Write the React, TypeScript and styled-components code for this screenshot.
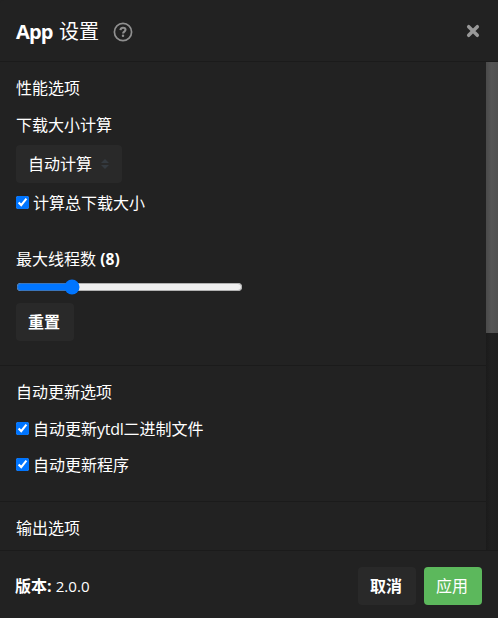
import React, { useState } from "react";
import styled, { createGlobalStyle } from "styled-components";

const GlobalStyle = createGlobalStyle`
  * { box-sizing: border-box; }
  html, body { margin: 0; background: #222; overflow: hidden; }
  body, button { font-family: "Open Sans", "Noto Sans CJK SC", sans-serif; }
  body { font-size: 16px; line-height: 24px; color: #fff; }
`;

const Modal = styled.div`
  display: flex;
  flex-direction: column;
  width: 498px;
  height: 618px;
  background: #222;
  border-radius: 4px;
  overflow: hidden;
`;

const Header = styled.header`
  display: flex;
  align-items: center;
  flex: none;
  height: 62px;
  padding: 0 16px;
  border-bottom: 1px solid #1b1b1b;
`;

const Title = styled.h5`
  display: flex;
  gap: 5px;
  margin: 2px 0 0;
  font-size: 20px;
  line-height: 30px;
  font-weight: 400;
  white-space: nowrap;
`;

const AppName = styled.span`
  display: inline-block;
  width: 38px;
  font-weight: 700;
  letter-spacing: -0.8px;
`;

const HelpIcon = styled.svg`
  margin: 2px 0 0 14px;
  color: #8f8f8f;
`;

const Close = styled.button`
  display: flex;
  margin: 0 2px 0 auto;
  padding: 0;
  border: 0;
  background: none;
  color: #999;
`;

const Body = styled.main`
  display: flex;
  flex: 1;
  min-height: 0;
  overflow: hidden;
`;

const Sections = styled.div`
  flex: 1;
  overflow: hidden;
`;

const ScrollTrack = styled.div`
  width: 12px;
  background: linear-gradient(to right, #1b1b1b, #202020 45%, #1e1e1e);
`;

const ScrollThumb = styled.div`
  height: 271px;
  background: linear-gradient(to right, #4a4a4a, #555 45%, #505050);
`;

const Section = styled.section<{ $height: number }>`
  height: ${(p) => p.$height}px;
  padding: 14px 16px 0;
  border-bottom: 1px solid #1b1b1b;
`;

const Label = styled.div<{ $top?: number }>`
  height: 24px;
  margin-top: ${(p) => p.$top ?? 0}px;
  white-space: nowrap;
  b { font-weight: 700; font-size: 15.6px; }
`;

const CheckRow = styled.label<{ $top: number }>`
  display: flex;
  align-items: center;
  height: 24px;
  margin-top: ${(p) => p.$top}px;
  white-space: nowrap;
  input {
    width: 13px;
    height: 13px;
    margin: 0 4px 2px 0;
  }
`;

const LatinWord = styled.span`
  letter-spacing: -0.25px;
`;

const Button = styled.button<{ $green?: boolean; $bold?: boolean }>`
  display: inline-flex;
  align-items: center;
  justify-content: center;
  width: 58px;
  height: 38px;
  padding: 0 2px 0 0;
  border: 0;
  border-radius: 4px;
  background: ${(p) => (p.$green ? "#5cb85c" : "#292929")};
  color: #fff;
  font-size: 16px;
  line-height: 24px;
  font-weight: ${(p) => (p.$bold ? 600 : 400)};
`;

const Select = styled(Button)`
  display: flex;
  justify-content: space-between;
  width: 106px;
  margin: 8px 0 0;
  padding: 0 13px 0 12px;
`;

const Range = styled.input`
  display: block;
  width: 227px;
  height: 16px;
  margin: 8px 0;
`;

const Footer = styled.footer`
  display: flex;
  align-items: center;
  flex: none;
  gap: 8px;
  height: 68px;
  padding: 3px 16px 0 15px;
  border-top: 1px solid #1b1b1b;
`;

const Version = styled.div`
  margin-right: auto;
  b { font-weight: 700; }
  span { font-size: 15.1px; }
`;

function Check({ top, children }: { top: number; children: React.ReactNode }) {
  return (
    <CheckRow $top={top}>
      <input type="checkbox" defaultChecked />
      <span>{children}</span>
    </CheckRow>
  );
}

export default function App() {
  const [threads, setThreads] = useState(8);
  return (
    <>
      <GlobalStyle />
      <Modal>
        <Header>
          <Title><AppName>App</AppName><span>设置</span></Title>
          <HelpIcon width="20" height="20" viewBox="0 0 20 20" fill="none" stroke="currentColor">
            <circle cx="10" cy="10" r="8.6" strokeWidth="1.7" />
            <path d="M7.4 8.1c.3-1.7 1.3-2.4 2.6-2.4 1.5 0 2.5.9 2.5 2.1 0 1.8-2.4 1.8-2.4 3.7" strokeWidth="2.1" />
            <circle cx="10" cy="13.8" r="1.25" fill="currentColor" stroke="none" />
          </HelpIcon>
          <Close aria-label="关闭">
            <svg width="14" height="14" viewBox="0 0 14 14" fill="none" stroke="currentColor" strokeWidth="3.5" strokeLinecap="round">
              <path d="M2.7 2.7l8.6 8.6M11.3 2.7l-8.6 8.6" />
            </svg>
          </Close>
        </Header>
        <Body>
          <Sections>
            <Section $height={304}>
              <Label>性能选项</Label>
              <Label $top={13}>下载大小计算</Label>
              <Select>
                自动计算
                <svg width="8" height="10" viewBox="0 0 8 10" fill="#343a40">
                  <path d="M0 4l4-4 4 4zM0 6l4 4 4-4z" />
                </svg>
              </Select>
              <Check top={8}>计算总下载大小</Check>
              <Label $top={32}>最大线程数 <b>({threads})</b></Label>
              <Range type="range" min={1} max={32} value={threads} onChange={(e) => setThreads(Number(e.target.value))} />
              <Button $bold onClick={() => setThreads(8)}>重置</Button>
            </Section>
            <Section $height={136}>
              <Label>自动更新选项</Label>
              <Check top={13}>自动更新<LatinWord>ytdl</LatinWord>二进制文件</Check>
              <Check top={12}>自动更新程序</Check>
            </Section>
            <Section $height={136}>
              <Label>输出选项</Label>
            </Section>
          </Sections>
          <ScrollTrack><ScrollThumb /></ScrollTrack>
        </Body>
        <Footer>
          <Version><b>版本:</b> <span>2.0.0</span></Version>
          <Button $bold>取消</Button>
          <Button $green>应用</Button>
        </Footer>
      </Modal>
    </>
  );
}
